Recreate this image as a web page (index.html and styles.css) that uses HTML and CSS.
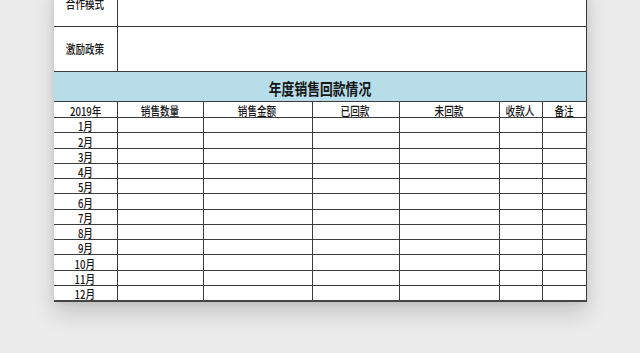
FILE: index.html
```html
<!DOCTYPE html>
<html lang="zh-CN">
<head>
<meta charset="utf-8">
<title>年度销售回款情况</title>
<link rel="stylesheet" href="styles.css">
</head>
<body>
<div class="page">
  <table class="sheet">
    <colgroup>
      <col class="c1"><col class="c2"><col class="c3"><col class="c4"><col class="c5"><col class="c6"><col class="c7">
    </colgroup>
    <tbody>
      <tr class="info">
        <td class="label"><span class="t">合作模式</span></td>
        <td colspan="6"></td>
      </tr>
      <tr class="info">
        <td class="label"><span class="t">激励政策</span></td>
        <td colspan="6"></td>
      </tr>
      <tr class="title">
        <td colspan="7"><span class="t">年度销售回款情况</span></td>
      </tr>
      <tr class="head">
        <td><span class="t">2019年</span></td>
        <td><span class="t">销售数量</span></td>
        <td><span class="t">销售金额</span></td>
        <td><span class="t">已回款</span></td>
        <td><span class="t">未回款</span></td>
        <td><span class="t">收款人</span></td>
        <td><span class="t">备注</span></td>
      </tr>
      <tr class="month"><td><span class="t">1月</span></td><td></td><td></td><td></td><td></td><td></td><td></td></tr>
      <tr class="month"><td><span class="t">2月</span></td><td></td><td></td><td></td><td></td><td></td><td></td></tr>
      <tr class="month"><td><span class="t">3月</span></td><td></td><td></td><td></td><td></td><td></td><td></td></tr>
      <tr class="month"><td><span class="t">4月</span></td><td></td><td></td><td></td><td></td><td></td><td></td></tr>
      <tr class="month"><td><span class="t">5月</span></td><td></td><td></td><td></td><td></td><td></td><td></td></tr>
      <tr class="month"><td><span class="t">6月</span></td><td></td><td></td><td></td><td></td><td></td><td></td></tr>
      <tr class="month"><td><span class="t">7月</span></td><td></td><td></td><td></td><td></td><td></td><td></td></tr>
      <tr class="month"><td><span class="t">8月</span></td><td></td><td></td><td></td><td></td><td></td><td></td></tr>
      <tr class="month"><td><span class="t">9月</span></td><td></td><td></td><td></td><td></td><td></td><td></td></tr>
      <tr class="month"><td><span class="t">10月</span></td><td></td><td></td><td></td><td></td><td></td><td></td></tr>
      <tr class="month"><td><span class="t">11月</span></td><td></td><td></td><td></td><td></td><td></td><td></td></tr>
      <tr class="month last"><td><span class="t">12月</span></td><td></td><td></td><td></td><td></td><td></td><td></td></tr>
    </tbody>
  </table>
</div>
</body>
</html>
```
FILE: styles.css
```css
html, body {
  margin: 0;
  padding: 0;
  height: 100%;
  overflow: hidden;
  background: #ececec;
}

body {
  font-family: "Noto Sans CJK SC", "Noto Sans", sans-serif;
  color: #151515;
}

.page {
  padding-left: 54px;
}

.sheet {
  width: 532px;
  margin-top: -18px;
  border-collapse: collapse;
  table-layout: fixed;
  background: #fff;
  box-shadow: 0 12px 22px rgba(0, 0, 0, 0.16), 0 0 8px rgba(0, 0, 0, 0.08);
}

.c1 { width: 63px; }
.c2 { width: 86px; }
.c3 { width: 109px; }
.c4 { width: 87px; }
.c5 { width: 100px; }
.c6 { width: 43px; }
.c7 { width: 44px; }

.sheet td {
  padding: 0;
  border: 1px solid #3c3c3c;
  text-align: center;
  font-size: 12px;
  font-weight: 500;
  line-height: 12px;
  vertical-align: bottom;
  white-space: nowrap;
  overflow: hidden;
}

.sheet td:first-child {
  border-left: none;
}

.sheet tr:first-child td {
  border-top: none;
}

.t {
  display: inline-block;
  vertical-align: top;
  line-height: 12px;
  transform: scaleX(0.8);
}

.info td {
  height: 44px;
  vertical-align: middle;
}

.title td {
  height: 27px;
  background: #b6dde8;
  vertical-align: middle;
  font-size: 16px;
  font-weight: 700;
  line-height: 16px;
  padding-top: 2px;
}

.title .t {
  line-height: 16px;
}

.head td {
  height: 15px;
}

.month td {
  height: 14.25px;
}

.last td {
  border-bottom: 2px solid #444;
}
```
